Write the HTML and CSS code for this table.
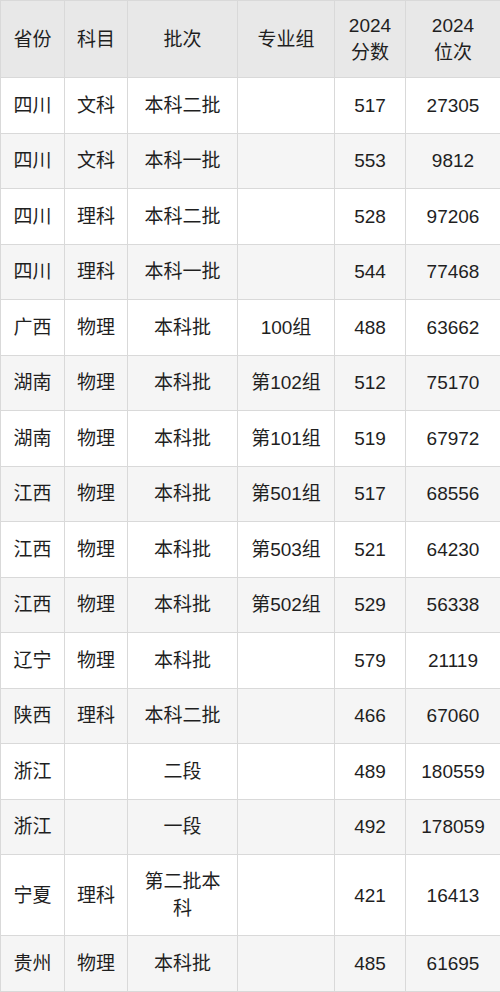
FILE: index.html
```html
<!DOCTYPE html>
<html lang="zh">
<head>
<meta charset="utf-8">
<link rel="stylesheet" href="styles.css">
</head>
<body>
<table class="scores">
  <colgroup>
    <col class="c1"><col class="c2"><col class="c3"><col class="c4"><col class="c5"><col class="c6">
  </colgroup>
  <thead>
    <tr><th>省份</th><th>科目</th><th>批次</th><th>专业组</th><th>2024<br>分数</th><th>2024<br>位次</th></tr>
  </thead>
  <tbody>
    <tr><td>四川</td><td>文科</td><td>本科二批</td><td></td><td>517</td><td>27305</td></tr>
    <tr><td>四川</td><td>文科</td><td>本科一批</td><td></td><td>553</td><td>9812</td></tr>
    <tr><td>四川</td><td>理科</td><td>本科二批</td><td></td><td>528</td><td>97206</td></tr>
    <tr><td>四川</td><td>理科</td><td>本科一批</td><td></td><td>544</td><td>77468</td></tr>
    <tr><td>广西</td><td>物理</td><td>本科批</td><td>100组</td><td>488</td><td>63662</td></tr>
    <tr><td>湖南</td><td>物理</td><td>本科批</td><td>第102组</td><td>512</td><td>75170</td></tr>
    <tr><td>湖南</td><td>物理</td><td>本科批</td><td>第101组</td><td>519</td><td>67972</td></tr>
    <tr><td>江西</td><td>物理</td><td>本科批</td><td>第501组</td><td>517</td><td>68556</td></tr>
    <tr><td>江西</td><td>物理</td><td>本科批</td><td>第503组</td><td>521</td><td>64230</td></tr>
    <tr><td>江西</td><td>物理</td><td>本科批</td><td>第502组</td><td>529</td><td>56338</td></tr>
    <tr><td>辽宁</td><td>物理</td><td>本科批</td><td></td><td>579</td><td>21119</td></tr>
    <tr><td>陕西</td><td>理科</td><td>本科二批</td><td></td><td>466</td><td>67060</td></tr>
    <tr><td>浙江</td><td></td><td>二段</td><td></td><td>489</td><td>180559</td></tr>
    <tr><td>浙江</td><td></td><td>一段</td><td></td><td>492</td><td>178059</td></tr>
    <tr class="tall"><td>宁夏</td><td>理科</td><td>第二批本科</td><td></td><td>421</td><td>16413</td></tr>
    <tr><td>贵州</td><td>物理</td><td>本科批</td><td></td><td>485</td><td>61695</td></tr>
  </tbody>
</table>
</body>
</html>
```
FILE: styles.css
```css
html, body {
  margin: 0;
  padding: 0;
  background: #ffffff;
}

.scores {
  width: 500px;
  border-collapse: collapse;
  table-layout: fixed;
  font-family: "Liberation Sans", "Noto Sans CJK SC", sans-serif;
  font-size: 19px;
  line-height: 27px;
  color: #1f1f1f;
}

.c1 { width: 64px; }
.c2 { width: 63px; }
.c3 { width: 110px; }
.c4 { width: 97px; }
.c5 { width: 71px; }
.c6 { width: 95px; }

.scores th,
.scores td {
  border: 1px solid #d9d9d9;
  text-align: center;
  vertical-align: middle;
  padding: 12px 10px;
  font-weight: normal;
}

.scores th {
  background: #e8e8e8;
  padding: 11px 8px;
}

.scores thead tr {
  height: 77px;
}

.scores tbody tr {
  height: 55.5px;
}

.scores tbody tr.tall {
  height: 81px;
}

.scores tbody tr:nth-child(even) td {
  background: #f5f5f5;
}

.scores tbody tr:nth-child(odd) td {
  background: #ffffff;
}
```
